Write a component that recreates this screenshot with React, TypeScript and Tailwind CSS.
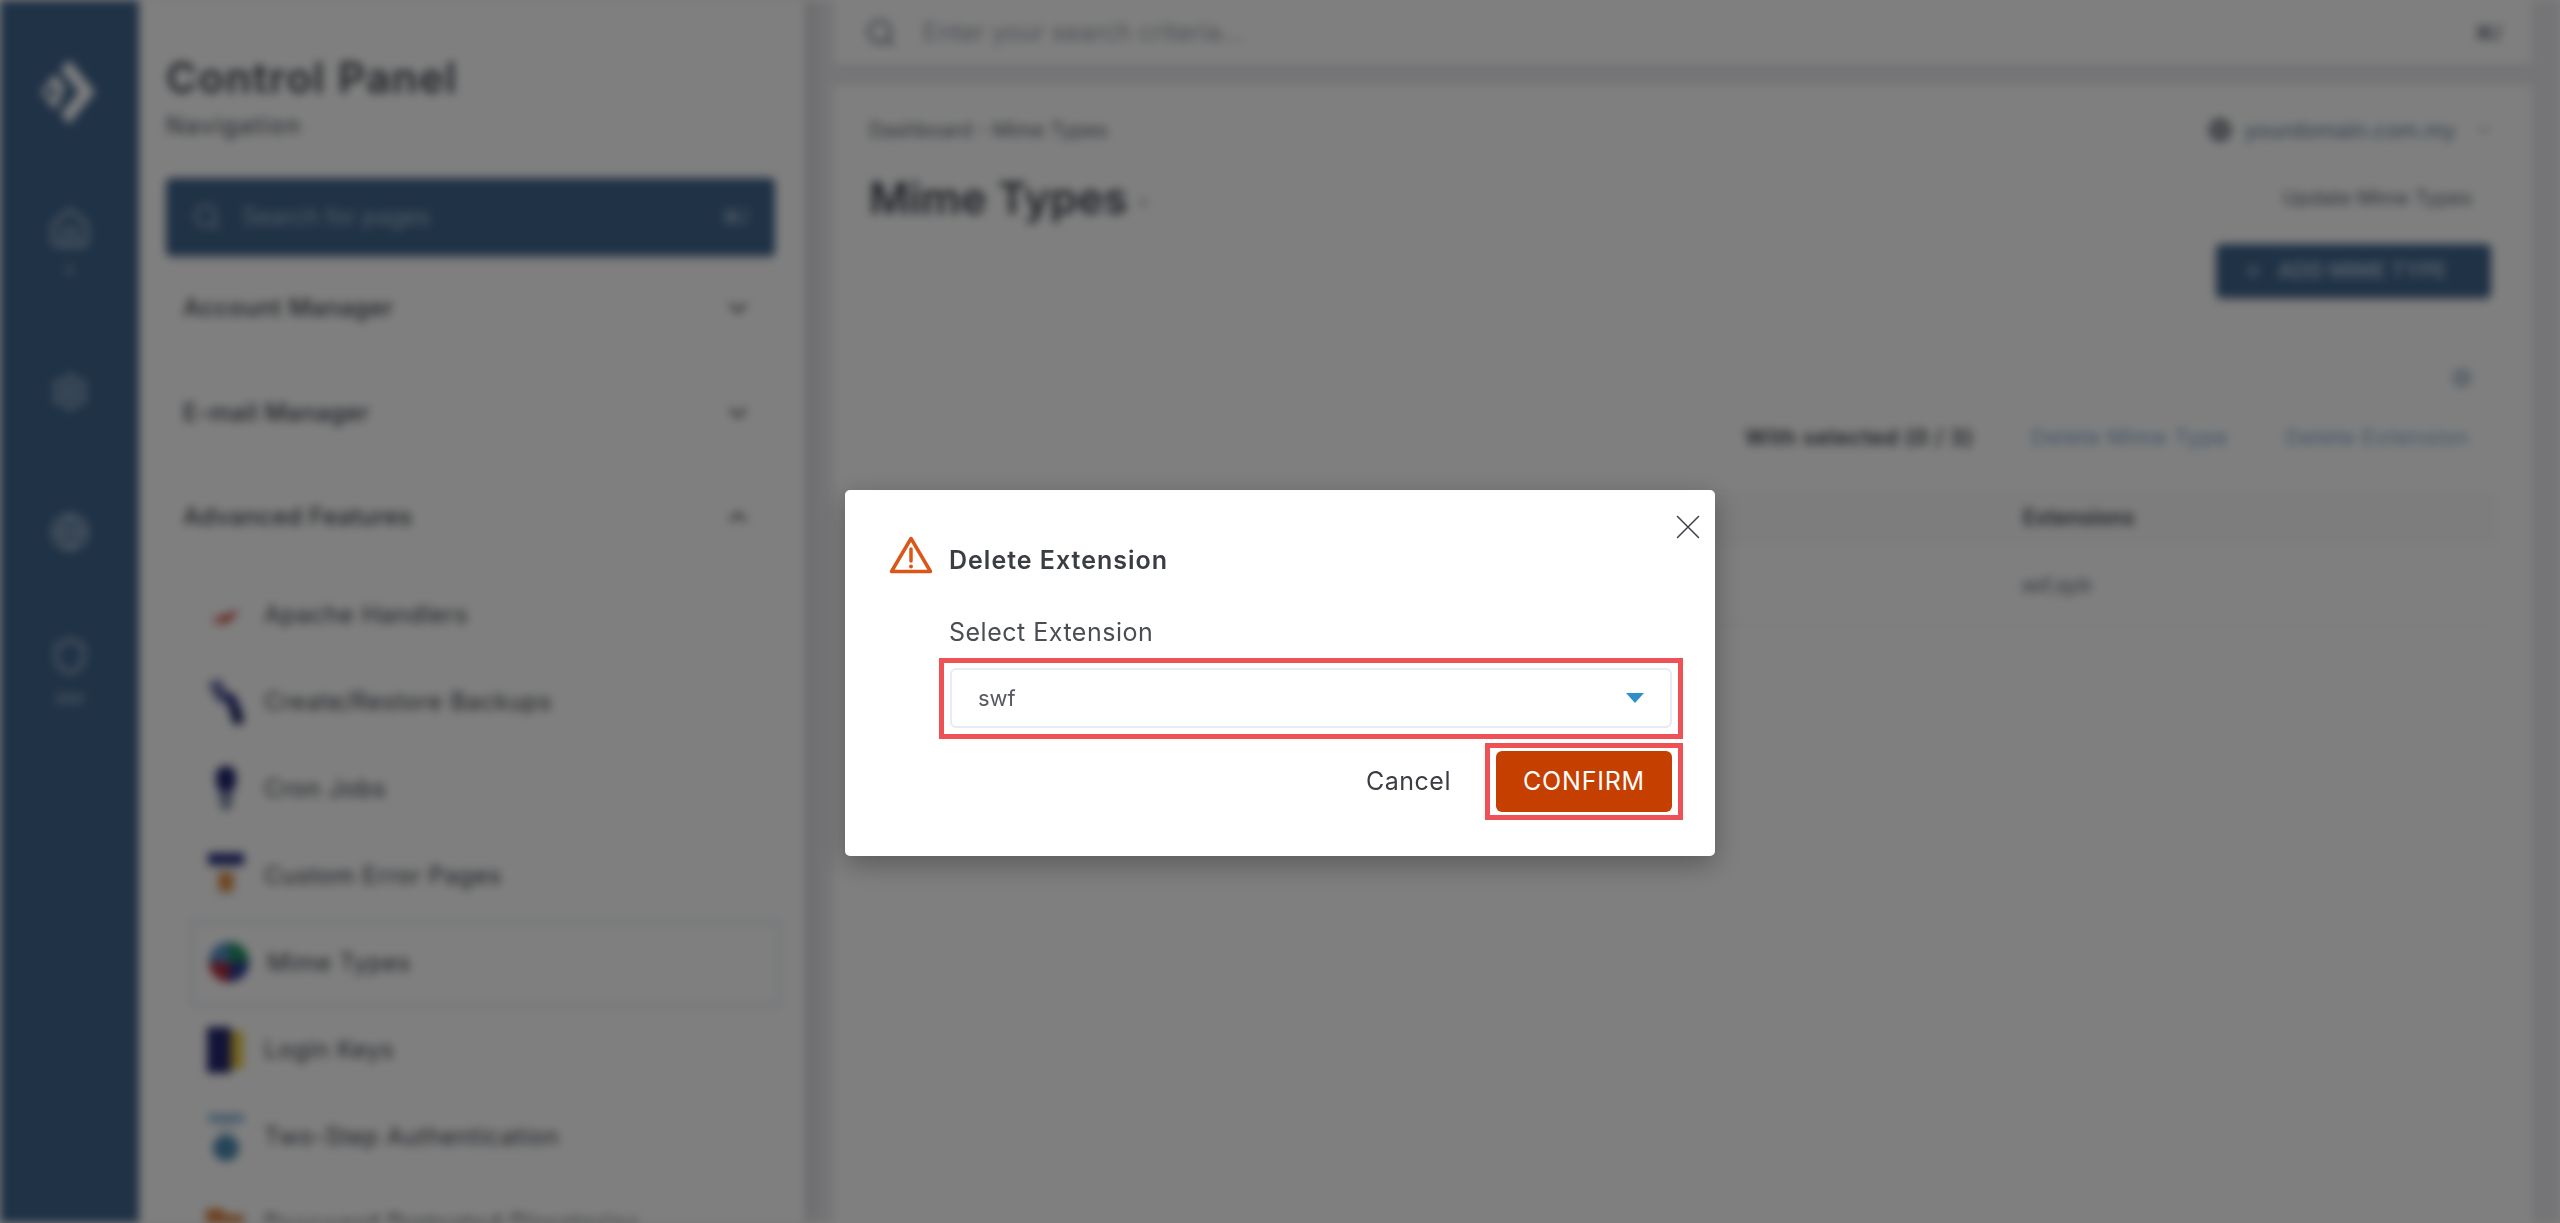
import React from 'react';
import { Search, ChevronDown, ChevronUp, Plus, Globe, Home, Settings, Shield, X } from 'lucide-react';

const font = "font-['Inter','Liberation_Sans',sans-serif]";

function ItemIcon({ name }: { name: string }) {
  switch (name) {
    case 'Apache Handlers':
      return (
        <svg className="w-[44px] h-[50px]" viewBox="0 0 44 50">
          <path d="M6 30 L36 20 L30 26 L22 34 L14 30 Z" fill="#c0392b" />
          <path d="M6 32 L22 30 L16 36 Z" fill="#e8b0a0" />
        </svg>
      );
    case 'Create/Restore Backups':
      return (
        <svg className="w-[44px] h-[50px]" viewBox="0 0 44 50">
          <path d="M4 6 L16 2 L26 20 L14 26 Z" fill="#6e70a8" />
          <path d="M18 18 L30 16 L38 34 L28 38 Z" fill="#2c2f7c" />
          <path d="M26 36 L38 34 L40 46 L30 48 Z" fill="#1e2a5c" />
        </svg>
      );
    case 'Cron Jobs':
      return (
        <svg className="w-[44px] h-[50px]" viewBox="0 0 44 50">
          <rect x="12" y="2" width="20" height="26" rx="9" fill="#22256e" />
          <path d="M14 28 H30 L26 46 H18 Z" fill="#7f8aa6" />
        </svg>
      );
    case 'Custom Error Pages':
      return (
        <svg className="w-[44px] h-[50px]" viewBox="0 0 44 50">
          <rect x="4" y="2" width="36" height="12" fill="#2c3080" />
          <path d="M10 14 H34 L30 46 H14 Z" fill="#f0f0f0" />
          <rect x="15" y="22" width="14" height="18" fill="#e0883c" />
        </svg>
      );
    case 'Mime Types':
      return (
        <svg className="w-[44px] h-[50px]" viewBox="0 0 44 50">
          <path d="M22 4 A20 20 0 0 1 42 24 L22 24 Z" fill="#1f8f5f" />
          <path d="M22 4 A20 20 0 0 0 2 24 L22 24 Z" fill="#4f8fc8" />
          <path d="M2 24 A20 20 0 0 0 22 44 L22 24 Z" fill="#b02a3a" />
          <path d="M42 24 A20 20 0 0 1 22 44 L22 24 Z" fill="#2c3a90" />
        </svg>
      );
    case 'Login Keys':
      return (
        <svg className="w-[44px] h-[50px]" viewBox="0 0 44 50">
          <rect x="3" y="2" width="24" height="46" fill="#24266e" />
          <rect x="27" y="6" width="12" height="38" fill="#e6c63c" />
        </svg>
      );
    case 'Two-Step Authentication':
      return (
        <svg className="w-[44px] h-[50px]" viewBox="0 0 44 50">
          <rect x="4" y="2" width="36" height="8" fill="#8fb8d8" />
          <path d="M10 10 H34 L26 24 H18 Z" fill="#e8eef4" />
          <circle cx="22" cy="36" r="13" fill="#4a8ab0" />
        </svg>
      );
    default:
      return (
        <svg className="w-[44px] h-[50px]" viewBox="0 0 44 50">
          <path d="M2 10 H18 L22 16 H40 V46 H2 Z" fill="#d9813c" />
        </svg>
      );
  }
}

const subItems = [
  'Apache Handlers',
  'Create/Restore Backups',
  'Cron Jobs',
  'Custom Error Pages',
  'Mime Types',
  'Login Keys',
  'Two-Step Authentication',
  'Password Protected Directories',
];

function Rail() {
  return (
    <aside className="w-[139px] shrink-0 bg-[#40648c] flex flex-col items-center text-[#a9bdd2]">
      <svg className="mt-[58px] w-[60px] h-[68px] -ml-[6px]" viewBox="0 0 60 68" fill="none">
        <path d="M32 2 L58 34 L32 66 L24 56 L42 34 L24 12 Z" fill="#ffffff" />
        <path d="M18 16 L28 30 L18 52 L4 34 Z M14 27 L9 34 L14 41 L20 34 Z" fill="#ffffff" fillRule="evenodd" />
      </svg>
      <Home className="mt-[81px] w-[44px] h-[44px]" />
      <span className="mt-[10px] text-[14px] leading-[18px]">A</span>
      <Settings className="mt-[93px] w-[40px] h-[40px]" />
      <Globe className="mt-[100px] w-[40px] h-[40px]" />
      <Shield className="mt-[84px] w-[40px] h-[40px]" />
      <span className="mt-[14px] text-[14px] leading-[18px] font-semibold">SSH</span>
    </aside>
  );
}

function Sidebar() {
  return (
    <aside className="w-[666px] shrink-0 bg-[#ffffff] pl-[27px] pr-[30px] pt-[52px] overflow-hidden shadow-[6px_0_14px_rgba(0,0,0,0.12)] z-10">
      <h1 className="text-[42px] leading-[52px] font-semibold text-[#3f4650] tracking-[1.5px]">Control Panel</h1>
      <p className="text-[24px] leading-[30px] mt-[7px] text-[#3f4650] tracking-[1.5px]">Navigation</p>
      <div className="mt-[37px] h-[78px] bg-[#40648c] rounded-[5px] flex items-center px-[26px] text-[#a9bdd2] shadow-md">
        <Search className="w-[30px] h-[30px]" />
        <span className="ml-[20px] text-[24px] tracking-[-0.4px]">Search for pages</span>
        <span className="ml-auto text-[20px] font-semibold">⌘/</span>
      </div>
      {[
        ['Account Manager', false],
        ['E-mail Manager', false],
        ['Advanced Features', true],
      ].map(([label, open]) => (
        <div key={label as string} className="h-[104.5px] flex items-center pl-[17px] pr-[22px] text-[#3a3f48] text-[24px] tracking-[0.4px]">
          <span className="font-medium">{label as string}</span>
          {open ? <ChevronUp className="ml-auto w-[30px] h-[30px]" /> : <ChevronDown className="ml-auto w-[30px] h-[30px]" />}
        </div>
      ))}
      <ul className="mt-[2px] pl-[24px]">
        {subItems.map((name) => (
          <li
            key={name}
            className={`h-[87px] flex items-center gap-[16px] text-[24px] text-[#3a3f48] tracking-[0.6px] pl-[14px] ${
              name === 'Mime Types' ? 'border-[3px] border-[#dfe6ee] rounded-[4px] -mr-[6px]' : ''
            }`}
          >
            <span className="w-[44px] flex justify-center shrink-0">
              <ItemIcon name={name} />
            </span>
            <span className="whitespace-nowrap">{name}</span>
          </li>
        ))}
      </ul>
    </aside>
  );
}

function Main() {
  return (
    <main className="flex-1 min-w-0 bg-[#eaeaee] px-[28px] flex flex-col">
      <div className="h-[65px] shrink-0 bg-white flex items-center pl-[32px] pr-[30px] text-[#6b7280] shadow-sm">
        <Search className="w-[32px] h-[32px]" />
        <span className="ml-[26px] text-[25px] text-[#9aa0aa]">Enter your search criteria...</span>
        <span className="ml-auto text-[20px] font-bold">⌘/</span>
      </div>
      <section className="mt-[20px] flex-1 bg-white px-[36px] pt-[30px]">
        <div className="flex items-center justify-between h-[30px]">
          <span className="text-[20px] text-[#57606c]">Dashboard - Mime Types</span>
          <span className="flex items-center gap-[12px] text-[22px] text-[#5a7896] pr-[4px]">
            <Globe className="w-[24px] h-[24px] text-[#2f3a48]" />
            yourdomain.com.my
            <ChevronDown className="w-[16px] h-[16px] ml-[8px]" />
          </span>
        </div>
        <div className="flex items-center justify-between mt-[25px] h-[56px]">
          <h2 className="text-[44px] font-semibold text-[#3f4650]">
            Mime Types <span className="text-[22px] text-[#9aa0aa] align-middle">›</span>
          </h2>
          <span className="text-[20px] text-[#57606c] pr-[24px]">Update Mime Types</span>
        </div>
        <div className="flex justify-end mt-[18px] pr-[5px]">
          <div className="w-[275px] h-[54px] bg-[#40648c] rounded-[5px] flex items-center gap-[14px] pl-[26px] text-[#b6cde2] text-[21px] font-semibold shadow-md">
            <Plus className="w-[22px] h-[22px]" />
            ADD MIME TYPE
          </div>
        </div>
        <div className="flex justify-end mt-[69px] pr-[23px] text-[#7f9bb8]">
          <Settings className="w-[22px] h-[22px]" />
        </div>
        <div className="flex justify-end items-center gap-[57px] mt-[34px] pr-[27px] text-[22px] leading-[28px] tracking-[0.6px]">
          <span className="font-semibold text-[#3a3f48]">With selected (0 / 3)</span>
          <span className="text-[#7ea6cc]">Delete Mime Type</span>
          <span className="text-[#7ea6cc]">Delete Extension</span>
        </div>
        <div className="mt-[42px] h-[50px] border border-[#eef0f3] bg-[#fbfbfc] flex items-center pl-[1153px] text-[21px] font-semibold text-[#3a3f48]">
          Extensions
        </div>
        <div className="h-[84px] border-b border-[#dfe9f3] flex items-center pl-[1153px] text-[20px] text-[#57606c]">
          asf,qyb
        </div>
      </section>
    </main>
  );
}

function DeleteExtensionModal() {
  return (
    <div className="fixed inset-0 bg-black/50 flex justify-center items-start pt-[490px]">
      <div className={`${font} relative w-[870px] h-[366px] bg-white rounded-[5px] shadow-[0_8px_28px_rgba(0,0,0,0.3)]`}>
        <button className="absolute top-[16px] right-[6px] text-[#3c4046]" aria-label="Close">
          <X className="w-[42px] h-[42px]" strokeWidth={0.85} />
        </button>
        <div className="flex items-start pl-[44px] pt-[46px]">
          <svg className="w-[44px] h-[38px] shrink-0" viewBox="0 0 44 38" fill="none">
            <path d="M22 2.5 L41.5 35.5 H2.5 Z" stroke="#d9571a" strokeWidth="3.5" strokeLinejoin="round" />
            <path d="M22 13 V25" stroke="#d9571a" strokeWidth="3.5" strokeLinecap="round" />
            <circle cx="22" cy="30.5" r="2" fill="#d9571a" />
          </svg>
          <h3 className="ml-[16px] mt-[8px] text-[25px] leading-[32px] font-semibold text-[#3a3d42] tracking-[1px] whitespace-nowrap">Delete Extension</h3>
        </div>
        <div className="pl-[105px] pr-[43px]">
          <label className="block mt-[40px] -ml-[1px] text-[25px] leading-[32px] text-[#4a4d52] tracking-[0.5px]">Select Extension</label>
          <div className="relative mt-[20px]">
            <div className="absolute -left-[11px] -right-[11px] -top-[10px] -bottom-[11px] border-[5px] border-[#ee5257]" />
            <div className="h-[60px] border-2 border-[#e8ebf1] rounded-[6px] flex items-center justify-between pl-[26px] pr-[26px] text-[22px] text-[#55585d]">
              swf
              <span className="w-0 h-0 border-x-[9px] border-x-transparent border-t-[10px] border-t-[#2f8fc9]" />
            </div>
          </div>
          <div className="flex justify-end items-center mt-[23px]">
            <button className="text-[25px] text-[#3a3d42] mr-[45px] tracking-[0.5px]">Cancel</button>
            <div className="relative">
              <div className="absolute -left-[11px] -right-[11px] -top-[8px] -bottom-[8px] border-[5px] border-[#ee5257]" />
              <button className="block w-[176px] h-[61px] rounded-[6px] bg-[#c54000] text-white text-[25px] tracking-[0.8px]">CONFIRM</button>
            </div>
          </div>
        </div>
      </div>
    </div>
  );
}

export default function App() {
  return (
    <div className="h-screen overflow-hidden bg-white relative">
      <div className={`${font} h-full flex blur-[5px]`}>
        <Rail />
        <Sidebar />
        <Main />
      </div>
      <DeleteExtensionModal />
    </div>
  );
}
